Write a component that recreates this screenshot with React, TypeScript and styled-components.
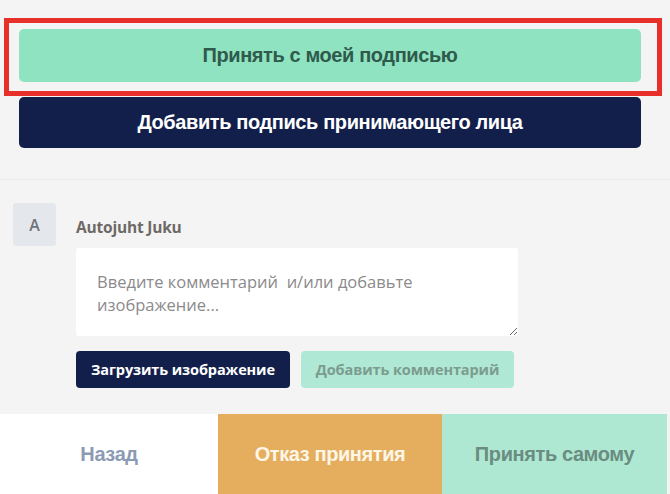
import React from 'react';
import styled, { createGlobalStyle } from 'styled-components';

const GlobalStyle = createGlobalStyle`
  html, body {
    margin: 0;
    padding: 0;
    background: #f4f4f4;
    font-family: "Liberation Sans", Arial, sans-serif;
  }
  * { box-sizing: border-box; }
`;

const Page = styled.div`
  width: 670px;
  height: 494px;
  display: flex;
  flex-direction: column;
  background: #f4f4f4;
  overflow: hidden;
`;

const ActionsSection = styled.section`
  height: 180px;
  padding: 29px 29px 0 19px;
  display: flex;
  flex-direction: column;
  gap: 15px;
  border-bottom: 1px solid #ebebeb;
`;

const Highlight = styled.div`
  position: relative;

  &::after {
    content: '';
    position: absolute;
    top: -11px;
    left: -15px;
    right: -21px;
    bottom: -14px;
    border: 5px solid #e8302a;
    pointer-events: none;
  }
`;

const WideButton = styled.button<{ $variant: 'mint' | 'navy' }>`
  width: 100%;
  border: none;
  border-radius: 5px;
  font-family: "Liberation Sans", Arial, sans-serif;
  font-weight: 700;
  font-size: 20px;
  letter-spacing: -0.4px;
  cursor: pointer;
  display: flex;
  align-items: center;
  justify-content: center;
  height: ${p => (p.$variant === 'mint' ? '53px' : '51px')};
  background: ${p => (p.$variant === 'mint' ? '#8fe3c1' : '#131f4b')};
  color: ${p => (p.$variant === 'mint' ? '#2f5a4c' : '#ffffff')};
`;

const CommentSection = styled.section`
  flex: 1;
  display: flex;
  gap: 20px;
  padding: 23px 0 0 13px;
`;

const Avatar = styled.div`
  width: 43px;
  height: 43px;
  flex-shrink: 0;
  border-radius: 3px;
  background: #e4e8ec;
  color: #70737a;
  font-family: "Open Sans", sans-serif;
  font-weight: 600;
  font-size: 16px;
  display: flex;
  align-items: center;
  justify-content: center;
`;

const CommentBody = styled.div`
  display: flex;
  flex-direction: column;
`;

const AuthorName = styled.div`
  font-family: "Open Sans", sans-serif;
  font-weight: 700;
  font-size: 15.5px;
  color: #6d6966;
  margin-top: 13px;
  height: 32px;
  letter-spacing: -0.2px;
`;

const CommentInput = styled.textarea`
  width: 442px;
  height: 88px;
  border: none;
  border-radius: 3px;
  background: #ffffff;
  padding: 22px 20px 0 21px;
  font-family: "Open Sans", sans-serif;
  font-size: 16.5px;
  line-height: 23px;
  color: #333;
  resize: vertical;
  outline: none;

  &::placeholder {
    color: #8b8a8c;
  }
`;

const ButtonRow = styled.div`
  display: flex;
  gap: 11px;
  margin-top: 15px;
`;

const SmallButton = styled.button<{ $variant: 'navy' | 'mint' }>`
  height: 37px;
  border: none;
  border-radius: 4px;
  padding: 0 6px;
  font-family: "Open Sans", sans-serif;
  font-weight: 700;
  font-size: 14.5px;
  letter-spacing: -0.1px;
  cursor: pointer;
  width: ${p => (p.$variant === 'navy' ? '214px' : '213px')};
  background: ${p => (p.$variant === 'navy' ? '#131f4b' : '#afe8d4')};
  color: ${p => (p.$variant === 'navy' ? '#ffffff' : '#7c9c8f')};
`;

const BottomBar = styled.nav`
  height: 80px;
  width: 667px;
  display: grid;
  grid-template-columns: 218px 224px 225px;
`;

const BarButton = styled.button<{ $tone: 'plain' | 'orange' | 'mint' }>`
  border: none;
  font-family: "Liberation Sans", Arial, sans-serif;
  font-weight: 700;
  font-size: 20px;
  letter-spacing: -0.4px;
  cursor: pointer;
  background: ${p =>
    p.$tone === 'plain' ? '#ffffff' : p.$tone === 'orange' ? '#e5ae5e' : '#aee8d2'};
  color: ${p =>
    p.$tone === 'plain' ? '#8c9ab4' : p.$tone === 'orange' ? '#fdf6e6' : '#6b8c80'};
`;

export default function App() {
  return (
    <Page>
      <GlobalStyle />
      <ActionsSection>
        <Highlight>
          <WideButton $variant="mint">Принять с моей подписью</WideButton>
        </Highlight>
        <WideButton $variant="navy">Добавить подпись принимающего лица</WideButton>
      </ActionsSection>

      <CommentSection>
        <Avatar>A</Avatar>
        <CommentBody>
          <AuthorName>Autojuht Juku</AuthorName>
          <CommentInput placeholder="Введите комментарий  и/или добавьте изображение..." />
          <ButtonRow>
            <SmallButton $variant="navy">Загрузить изображение</SmallButton>
            <SmallButton $variant="mint">Добавить комментарий</SmallButton>
          </ButtonRow>
        </CommentBody>
      </CommentSection>

      <BottomBar>
        <BarButton $tone="plain">Назад</BarButton>
        <BarButton $tone="orange">Отказ принятия</BarButton>
        <BarButton $tone="mint">Принять самому</BarButton>
      </BottomBar>
    </Page>
  );
}
